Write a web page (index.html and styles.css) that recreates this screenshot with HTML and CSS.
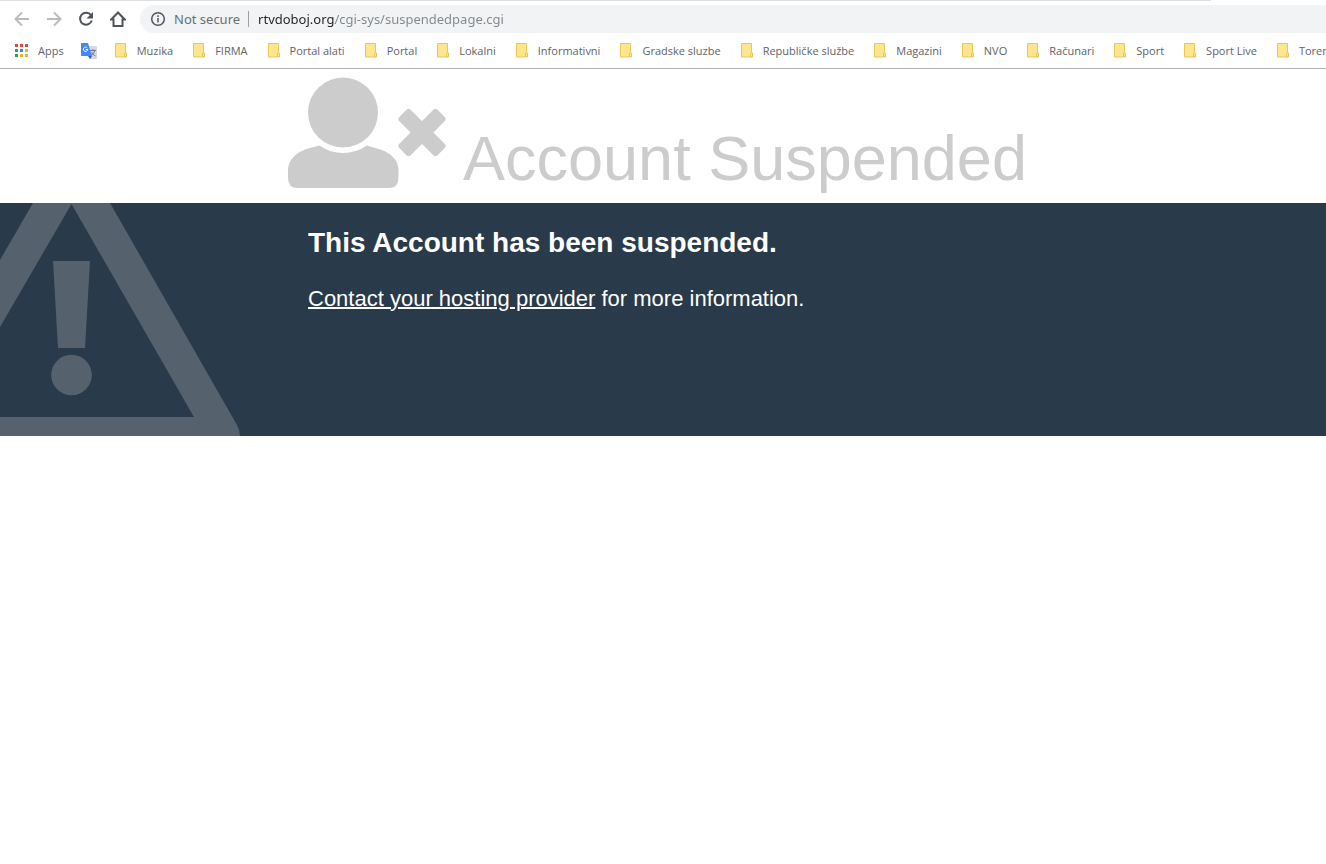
FILE: index.html
```html
<!DOCTYPE html>
<html lang="en">
<head>
<meta charset="utf-8">
<meta name="viewport" content="width=device-width, initial-scale=1">
<title>Account Suspended</title>
<link rel="stylesheet" href="styles.css">
</head>
<body>
<svg class="defs" width="0" height="0" aria-hidden="true">
  <symbol id="folder" viewBox="0 0 13 15"><path d="M.5.5h10v9.500l1 .5v3.500h-11z" fill="#fde68d" stroke="#e9c658"/><path d="M9.500 13.500v-3.500l1-.5 1 .5v3.500z" fill="#fde68d" stroke="#e9c658"/></symbol>
</svg>
<div class="browser">
  <div class="tab-line"></div>
  <div class="toolbar">
    <button class="tool tool-off" aria-label="Back"><svg width="16" height="16" viewBox="0 0 16 16"><path d="M15 8H2M8 1.500 1.500 8 8 14.500"/></svg></button>
    <button class="tool tool-off" aria-label="Forward"><svg width="16" height="16" viewBox="0 0 16 16"><path d="M1 8h13M8 1.500 14.500 8 8 14.500"/></svg></button>
    <button class="tool" aria-label="Reload"><svg width="16" height="16" viewBox="0 0 16 16"><path d="M13 4.200A6 6 0 1 0 13.800 9.500"/><path class="solid" d="M15 1v6.500H8.500z"/></svg></button>
    <button class="tool" aria-label="Home"><svg width="16" height="16" viewBox="0 0 16 16"><path d="M1.200 8.500 8 1.500l6.800 7H12.500V15h-9V8.500z"/></svg></button>
    <div class="address">
      <button class="security"><svg width="16" height="16" viewBox="0 0 16 16"><circle cx="8" cy="8" r="6.300"/><path d="M8 7v4.500M8 4.300v1.700"/></svg>Not secure</button>
      <input class="url" type="text" aria-label="Address" value="rtvdoboj.org/cgi-sys/suspendedpage.cgi">
    </div>
  </div>
  <nav class="bookmarks" aria-label="Bookmarks">
    <a class="apps" href="#"><svg width="13" height="13" viewBox="0 0 13 13"><path fill="#d94a3d" d="M0 0h3v3H0zM5 0h3v3H5zM10 0h3v3h-3z"/><path fill="#2fa15d" d="M0 5h3v3H0zM0 10h3v3H0z"/><path fill="#3d82e8" d="M5 5h3v3H5z"/><path fill="#e8b42c" d="M10 5h3v3h-3zM5 10h3v3H5zM10 10h3v3h-3z"/></svg>Apps</a>
    <a class="translate" href="#" aria-label="Google Translate"><svg width="16" height="16" viewBox="0 0 16 16"><path fill="#d5d8de" d="M6 3h9.300q.7 0 .7.700v11.600q0 .7-.7.700H9z"/><path d="M9 7.500h6M12 6v1.500M14 7.500Q13 11 9.500 12.500M10.500 9q1.500 3 4 4" fill="none" stroke="#6b7c93"/><path fill="#2a56c6" d="M7 13h4l-2 3z"/><path fill="#4688f1" d="M.7 0H7l4 13H.7Q0 13 0 12.300V.7Q0 0 .7 0z"/><path d="M6.300 4.900A2.200 2.200 0 1 0 6.800 6.500H4.700" fill="none" stroke="#fff"/></svg></a>
    <a class="mark" href="#"><svg width="13" height="15"><use href="#folder"/></svg>Muzika</a>
    <a class="mark" href="#"><svg width="13" height="15"><use href="#folder"/></svg>FIRMA</a>
    <a class="mark" href="#"><svg width="13" height="15"><use href="#folder"/></svg>Portal alati</a>
    <a class="mark" href="#"><svg width="13" height="15"><use href="#folder"/></svg>Portal</a>
    <a class="mark" href="#"><svg width="13" height="15"><use href="#folder"/></svg>Lokalni</a>
    <a class="mark" href="#"><svg width="13" height="15"><use href="#folder"/></svg>Informativni</a>
    <a class="mark" href="#"><svg width="13" height="15"><use href="#folder"/></svg>Gradske sluzbe</a>
    <a class="mark" href="#"><svg width="13" height="15"><use href="#folder"/></svg>Republičke službe</a>
    <a class="mark" href="#"><svg width="13" height="15"><use href="#folder"/></svg>Magazini</a>
    <a class="mark" href="#"><svg width="13" height="15"><use href="#folder"/></svg>NVO</a>
    <a class="mark" href="#"><svg width="13" height="15"><use href="#folder"/></svg>Računari</a>
    <a class="mark" href="#"><svg width="13" height="15"><use href="#folder"/></svg>Sport</a>
    <a class="mark" href="#"><svg width="13" height="15"><use href="#folder"/></svg>Sport Live</a>
    <a class="mark" href="#"><svg width="13" height="15"><use href="#folder"/></svg>Toren</a>
  </nav>
</div>
<header class="container status">
  <svg class="user-icon" width="160" height="111" viewBox="0 0 160 111" aria-hidden="true">
    <circle cx="55" cy="35.500" r="35"/>
    <path d="M31.500 68.500Q42 76 55 76T79 68.500L89 71.500C102 74.500 110.500 83 110.500 93V101Q110.500 111 100.500 111H10Q0 111 0 101V93C0 83 9 74.500 20 71.500Z"/>
    <g transform="translate(134 55.500) rotate(45)"><rect x="-27" y="-8" width="54" height="16" rx="3"/><rect x="-8" y="-27" width="16" height="54" rx="3"/></g>
  </svg>
  <h1>Account Suspended</h1>
</header>
<main class="info">
  <svg class="warning" width="240" height="233" viewBox="0 0 240 233" aria-hidden="true">
    <path fill-rule="evenodd" d="M33 0H110L237 222Q240 227 240 233H0V214H194L71.500 1 0 124V57Z"/>
    <path d="M53 58H90L85 145H58Z"/>
    <circle cx="71.500" cy="172" r="20.300"/>
  </svg>
  <div class="container message">
    <h2>This Account has been suspended.</h2>
    <p><a href="#">Contact your hosting provider</a> for more information.</p>
  </div>
</main>
</body>
</html>
```
FILE: styles.css
```css
* { box-sizing: border-box; }
body {
  margin: 0;
  overflow-x: hidden;
  background: #fff;
  font-family: "Liberation Sans", Arial, sans-serif;
}
h1, h2, p { margin: 0; }
svg { flex: none; }
button { border: 0; background: none; padding: 0; font: inherit; }
.defs { position: absolute; }

.browser {
  overflow: hidden;
  border-bottom: 1px solid #b0b0b0;
  font-family: "Open Sans", "Noto Sans", sans-serif;
  color: #5f6368;
}
.tab-line { height: 1px; margin-right: 115px; background: #dcdfe2; }
.toolbar {
  display: flex;
  align-items: center;
  gap: 16px;
  padding: 4px 0 0 14px;
}
.tool { display: flex; }
.tool svg, .security svg { fill: none; stroke: #50545a; stroke-width: 2; }
.tool-off svg { stroke: #babcbe; }
.tool svg .solid { fill: #50545a; stroke: none; }
.security svg { stroke-width: 1.5; }
.address {
  flex: 1;
  display: flex;
  align-items: center;
  height: 28px;
  margin-left: -2px;
  padding-left: 10px;
  border-radius: 14px 0 0 14px;
  background: #f1f3f4;
  font-family: "Noto Sans", "Open Sans", sans-serif;
  font-size: 13px;
}
.security {
  display: flex;
  align-items: center;
  gap: 8px;
  height: 16px;
  padding-right: 8px;
  border-right: 1px solid #9aa0a6;
  color: #6a6e73;
}
.url {
  flex: 1;
  min-width: 0;
  height: 28px;
  border: 0;
  padding: 0 0 0 9px;
  font: inherit;
  color: transparent;
  background: linear-gradient(to right, #202124 86px, #80868b 86px);
  -webkit-background-clip: text;
  background-clip: text;
}
.bookmarks {
  display: flex;
  align-items: center;
  gap: 20px;
  height: 35px;
  padding-left: 15px;
  font-size: 11px;
  white-space: nowrap;
}
.bookmarks a {
  display: flex;
  flex: none;
  align-items: center;
  color: inherit;
  text-decoration: none;
}
.apps { gap: 10px; margin-right: -3px; }
.translate { margin-right: -2px; }
.mark { gap: 9px; }

.container { width: 100%; max-width: 750px; margin: 0 auto; }
.status {
  display: flex;
  align-items: flex-end;
  gap: 15px;
  padding: 8px 0 15px;
  color: #ccc;
}
.user-icon { fill: #ccc; }
.status h1 {
  font-size: 63px;
  font-weight: 400;
  line-height: 60px;
  white-space: nowrap;
}
.info {
  position: relative;
  min-height: 233px;
  background: #293a4a;
  color: #fff;
}
.warning {
  position: absolute;
  top: 0;
  left: 0;
  fill: #55626e;
}
.message {
  position: relative;
  padding: 23px 20px;
}
.message h2 { font-size: 28px; line-height: 34px; }
.message p { margin-top: 26px; font-size: 22px; line-height: 26px; }
.message a { color: inherit; text-decoration-thickness: 2px; }
```
